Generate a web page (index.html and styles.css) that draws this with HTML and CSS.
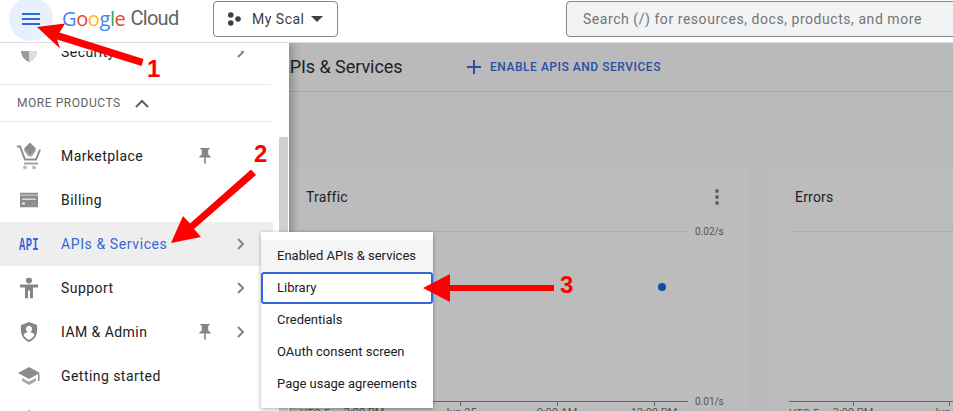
FILE: index.html
```html
<!DOCTYPE html>
<html lang="en">
<head>
  <meta charset="UTF-8" />
  <title>APIs &amp; Services - Google Cloud</title>
  <link rel="stylesheet" href="styles.css">
</head>
<body>
  <header class="topbar">
    <button class="menu-btn" aria-label="Main menu">
      <svg width="18" height="12" viewBox="0 0 18 12"><path d="M0 0h18v2H0zM0 5h18v2H0zM0 10h18v2H0z" fill="#3367d6"/></svg>
    </button>
    <div class="logo">
      <span class="logo-google"><span class="g-blue">G</span><span class="g-red">o</span><span class="g-yellow">o</span><span class="g-blue">g</span><span class="g-green">l</span><span class="g-red">e</span></span>
      <span class="logo-cloud">Cloud</span>
    </div>
    <button class="project-btn">
      <svg width="14" height="14" viewBox="0 0 14 14" fill="#3c4043"><circle cx="2.800" cy="3" r="2.800"/><circle cx="2.800" cy="11" r="2.800"/><circle cx="10" cy="7" r="2.800"/></svg>
      <span>My Scal</span>
      <svg width="12" height="6" viewBox="0 0 12 6"><path d="M0 0h12L6 6z" fill="#3c4043"/></svg>
    </button>
    <div class="search">Search (/) for resources, docs, products, and more</div>
  </header>

  <main class="content">
    <div class="page-head">
      <h1>APIs &amp; Services</h1>
      <a class="enable-link">
        <svg width="14" height="14" viewBox="0 0 14 14"><path d="M6 0h2v6h6v2H8v6H6V8H0V6h6z" fill="#2a4fa5"/></svg>
        ENABLE APIS AND SERVICES
      </a>
    </div>
    <div class="cards">
      <section class="card">
        <div class="card-head">
          <h2>Traffic</h2>
          <svg class="dots" width="4" height="16" viewBox="0 0 4 16" fill="#5f5f5f"><circle cx="2" cy="2" r="1.900"/><circle cx="2" cy="8" r="1.900"/><circle cx="2" cy="14" r="1.900"/></svg>
        </div>
        <div class="chart">
          <div class="plot">
            <span class="axis-zone">UTC-5</span>
            <span class="tick tick-a"><span>3:00 PM</span></span>
            <span class="tick tick-b"><span>Jun 25</span></span>
            <span class="tick tick-c"><span>9:00 AM</span></span>
            <span class="tick tick-d"><span>12:00 PM</span></span>
            <span class="dot"></span>
          </div>
          <div class="scale"><span>0.02/s</span><span>0.01/s</span></div>
        </div>
      </section>
      <section class="card">
        <div class="card-head"><h2>Errors</h2></div>
        <div class="chart">
          <div class="plot">
            <span class="axis-zone">UTC-5</span>
            <span class="tick tick-a"><span>3:00 PM</span></span>
            <span class="tick tick-b"><span>Jun 25</span></span>
          </div>
        </div>
      </section>
    </div>
  </main>

  <aside class="sidebar">
    <div class="sidebar-mask"></div>
    <span class="scrollbar"></span>
    <nav class="nav">
      <a class="nav-item">
        <svg class="nav-icon" width="20" height="20" viewBox="0 0 20 20"><path d="M10 0l8 3v6c0 5-3.500 9-8 11-4.500-2-8-6-8-11V3z" fill="#9a9a9a"/><path d="M10 0l8 3v6c0 5-3.500 9-8 11z" fill="#dedede"/></svg>
        <span class="nav-label">Security</span>
        <svg class="chevron" width="7" height="12" viewBox="0 0 7 12"><path d="M1 1l5 5-5 5" fill="none" stroke="#80868b" stroke-width="2"/></svg>
      </a>
      <div class="section-head">
        <span>MORE PRODUCTS</span>
        <svg width="14" height="9" viewBox="0 0 14 9"><path d="M1 8l6-6 6 6" fill="none" stroke="#5f6368" stroke-width="2"/></svg>
      </div>
      <div class="nav-list">
        <a class="nav-item">
          <svg class="nav-icon" width="24" height="27" viewBox="0 0 24 27"><path d="M0 4h3l5 13h11l4-10" fill="none" stroke="#8c8c8c" stroke-width="2"/><path d="M7 21h14" stroke="#a0a0a0" stroke-width="2"/><path d="M7 7h2l4 6 4-6h2v1l-4 6h-4l-4-6z" fill="#a8a8a8"/><path d="M13 0l6 6-6 7-6-7z" fill="#8c8c8c"/><circle cx="8" cy="25" r="2" fill="#bdbdbd"/><circle cx="17" cy="25" r="2" fill="#bdbdbd"/></svg>
          <span class="nav-label">Marketplace</span>
          <svg class="pin" width="14" height="16" viewBox="5 2 14 20"><path d="M16 9V4h1c.55 0 1-.45 1-1s-.45-1-1-1H7c-.55 0-1 .45-1 1s.45 1 1 1h1v5c0 1.660-1.340 3-3 3v2h5.970v7l1 1 1-1v-7H19v-2c-1.660 0-3-1.340-3-3z" fill="#80868b"/></svg>
        </a>
        <a class="nav-item">
          <svg class="nav-icon" width="18" height="15" viewBox="0 0 18 15"><path d="M0 0h18v15H0z" fill="#8c8c8c"/><path d="M0 2h18v1.500H0z" fill="#bdbdbd"/><path d="M2 6h14v1.500H2z" fill="#d8d8d8"/><path d="M2 10h3v2H2z" fill="#eeeeee"/><path d="M12 11h1v1h-1zM15 11h1v1h-1z" fill="#c4c4c4"/></svg>
          <span class="nav-label">Billing</span>
        </a>
        <a class="nav-item active">
          <svg class="nav-icon" width="20" height="14" viewBox="0 0 20 14"><text x="0" y="12.500" class="api-glyph" textLength="20" lengthAdjust="spacingAndGlyphs">API</text></svg>
          <span class="nav-label">APIs &amp; Services</span>
          <svg class="chevron" width="7" height="12" viewBox="0 0 7 12"><path d="M1 1l5 5-5 5" fill="none" stroke="#80868b" stroke-width="2"/></svg>
        </a>
        <a class="nav-item">
          <svg class="nav-icon" width="18" height="21" viewBox="0 0 18 21" fill="#80868b"><circle cx="9" cy="3" r="3"/><path d="M0 7h18v3h-5v11h-3v-8H8v8H5V10H0z"/></svg>
          <span class="nav-label">Support</span>
          <svg class="chevron" width="7" height="12" viewBox="0 0 7 12"><path d="M1 1l5 5-5 5" fill="none" stroke="#80868b" stroke-width="2"/></svg>
        </a>
        <a class="nav-item">
          <svg class="nav-icon" width="16" height="20" viewBox="0 0 16 20"><path d="M8 0l8 3v6c0 5-3.500 9-8 11-4.500-2-8-6-8-11V3z" fill="#80868b"/><circle cx="8" cy="7" r="3" fill="#fff"/><path d="M2.500 13c1-2 3-3 5.500-3s4.500 1 5.500 3C12 15.500 10 17 8 18c-2-1-4-2.500-5.500-5z" fill="#fff"/></svg>
          <span class="nav-label">IAM &amp; Admin</span>
          <svg class="pin" width="14" height="16" viewBox="5 2 14 20"><path d="M16 9V4h1c.55 0 1-.45 1-1s-.45-1-1-1H7c-.55 0-1 .45-1 1s.45 1 1 1h1v5c0 1.660-1.340 3-3 3v2h5.970v7l1 1 1-1v-7H19v-2c-1.660 0-3-1.340-3-3z" fill="#80868b"/></svg>
          <svg class="chevron" width="7" height="12" viewBox="0 0 7 12"><path d="M1 1l5 5-5 5" fill="none" stroke="#80868b" stroke-width="2"/></svg>
        </a>
        <a class="nav-item">
          <svg class="nav-icon" width="22" height="18" viewBox="0 0 22 18" fill="#8c8c8c"><path d="M11 0l11 6-11 6L0 6z"/><path d="M4 11l7 3.500 7-3.500v3l-7 4-7-4z" fill="#a8a8a8"/><path d="M20 7h1.500v7H20z"/></svg>
          <span class="nav-label">Getting started</span>
        </a>
        <a class="nav-item">
          <svg class="nav-icon" width="20" height="20" viewBox="0 0 20 20"><path d="M10 0l10 6-10 6L0 6z" fill="#9a9a9a"/></svg>
          <span class="nav-label"></span>
        </a>
      </div>
    </nav>
  </aside>

  <ul class="flyout">
    <li class="hover">Enabled APIs &amp; services</li>
    <li class="focused">Library</li>
    <li>Credentials</li>
    <li>OAuth consent screen</li>
    <li>Page usage agreements</li>
  </ul>

  <svg class="notes" width="953" height="411" viewBox="0 0 953 411">
    <g fill="#fe0000">
      <path d="M37 27L65 23.500L59.500 32.500L143.500 59L141.500 66L57 39.500L60 48.500z"/>
      <path d="M171 243L183 216L190 223.500L251 169.500L256 175L194 229L201 237z"/>
      <path d="M423 288L450 274V285H554V291H450V302z"/>
      <text x="147" y="76.500" class="note-num">1</text>
      <text x="254" y="162" class="note-num">2</text>
      <text x="560" y="293" class="note-num">3</text>
    </g>
  </svg>
</body>
</html>
```

FILE: styles.css
```css
:root {
  --blue: #3367d6;
  --gray-icon: #80868b;
  --gray-text: #5f6368;
  --dim: #bababa;
  --card: #bcbcbc;
  --font-family: 'Roboto', 'Liberation Sans', sans-serif;
}

* {
  box-sizing: border-box;
}

html, body {
  height: 100%;
}

body {
  margin: 0;
  position: relative;
  overflow: hidden;
  font-family: var(--font-family);
  color: #202124;
  background-color: var(--dim);
}

h1, h2 {
  margin: 0;
  font-weight: 400;
}

/* top bar */

.topbar {
  height: 43px;
  position: relative;
  z-index: 2;
  display: flex;
  align-items: flex-start;
  background-color: #fff;
  border-bottom: 1px solid #dadce0;
}

.menu-btn {
  width: 44px;
  height: 44px;
  margin: -3px 0 0 9px;
  padding: 0;
  border: none;
  border-radius: 50%;
  background-color: #e8f0fe;
  display: flex;
  align-items: center;
  justify-content: center;
  flex-shrink: 0;
}

.logo {
  margin: 5px 0 0 9px;
  width: 151px;
  display: flex;
  gap: 5px;
  font-family: 'Open Sans', sans-serif;
  font-size: 20px;
  line-height: 27px;
  letter-spacing: -0.4px;
}

.logo-cloud {
  color: var(--gray-text);
  font-family: var(--font-family);
  letter-spacing: -0.7px;
}

.g-blue { color: #4285f4; }
.g-red { color: #ea4335; }
.g-yellow { color: #fbbc05; }
.g-green { color: #34a853; }

.project-btn {
  width: 125px;
  height: 36px;
  margin-top: 1px;
  padding: 0 0 0 14px;
  display: flex;
  align-items: center;
  gap: 10px;
  border: 1px solid var(--gray-icon);
  border-radius: 4px;
  background-color: #fff;
  color: #3c4043;
  font-family: var(--font-family);
  font-size: 14px;
  letter-spacing: 0.5px;
  flex-shrink: 0;
}

.project-btn span {
  width: 49px;
  white-space: nowrap;
  text-align: left;
}

.search {
  flex: 1;
  height: 36px;
  margin: 1px -10px 0 228px;
  padding-left: 16px;
  line-height: 34px;
  font-size: 14px;
  letter-spacing: 0.55px;
  color: #757575;
  background-color: #f1f3f4;
  border: 1px solid var(--gray-icon);
  border-radius: 4px;
}

/* dimmed page behind the menu */

.content {
  height: 368px;
  padding-left: 278px;
  overflow: hidden;
}

.page-head {
  height: 49px;
  padding-bottom: 2px;
  display: flex;
  align-items: center;
  border-bottom: 1px solid #a9a9a9;
}

.page-head h1 {
  width: 189px;
  font-size: 18px;
  letter-spacing: -0.05px;
}

.enable-link {
  margin-top: 2px;
  display: flex;
  align-items: center;
  gap: 9px;
  color: #2a4fa5;
  font-size: 12px;
  font-weight: 500;
  letter-spacing: 0.53px;
}

.cards {
  display: grid;
  grid-template-columns: 471px 471px;
  gap: 18px;
  margin-top: 72px;
  height: 247px;
}

.card {
  padding: 0 26px 0 21px;
  background-color: var(--card);
  border: 1px solid #b8b8b8;
  border-radius: 6px 6px 0 0;
}

.card-head {
  height: 66px;
  padding: 21px 0 0 6px;
  display: flex;
  justify-content: space-between;
}

.card-head h2 {
  font-size: 14px;
  line-height: 22px;
  letter-spacing: 0.2px;
}

.dots {
  margin: 3px 3px 0 0;
}

.chart {
  display: flex;
  gap: 7px;
}

.plot {
  flex: 1;
  height: 171px;
  position: relative;
  border-top: 1px solid #b0b0b0;
  border-bottom: 1px solid #666;
}

.scale {
  width: 27px;
  height: 184px;
  margin-top: -6px;
  display: flex;
  flex-direction: column;
  justify-content: space-between;
  font-size: 10px;
  line-height: 14px;
  color: #555;
}

.tick {
  position: absolute;
  bottom: -5px;
  width: 1px;
  height: 4px;
  background-color: #666;
}

.tick span,
.axis-zone {
  position: absolute;
  white-space: nowrap;
  font-size: 11px;
  line-height: 13px;
  color: #555;
}

.tick span {
  left: 0;
  top: 4px;
  transform: translateX(-50%);
}

.axis-zone {
  left: 0;
  top: calc(100% + 6px);
}

.tick-a { left: 64px; }
.tick-b { left: 160px; }
.tick-c { left: 257px; }
.tick-d { left: 354px; }

.dot {
  position: absolute;
  left: 358px;
  top: 51px;
  width: 8px;
  height: 8px;
  border-radius: 50%;
  background-color: #0b4ea8;
}

/* side menu */

.sidebar {
  position: absolute;
  top: 43px;
  left: 0;
  bottom: 0;
  width: 289px;
  background-color: #fff;
  box-shadow: 3px 0 9px rgba(0, 0, 0, 0.3);
  overflow: hidden;
}

.sidebar-mask {
  position: absolute;
  top: 0;
  left: 0;
  right: 0;
  height: 8px;
  background-color: #fff;
  z-index: 1;
}

.scrollbar {
  position: absolute;
  top: 94px;
  left: 279px;
  width: 9px;
  height: 300px;
  background-color: #d0d0d0;
}

.nav {
  width: 273px;
  margin-top: -13px;
}

.nav-item {
  height: 44px;
  position: relative;
  display: flex;
  align-items: center;
  padding-left: 61px;
  font-size: 14px;
  letter-spacing: 0.45px;
  color: #202124;
}

.nav-item.active {
  background-color: #eeeeee;
  color: var(--blue);
  letter-spacing: 0.6px;
}

.nav-icon {
  position: absolute;
  left: 29px;
  top: 50%;
  transform: translate(-50%, -50%);
}

.api-glyph {
  font-family: 'Liberation Mono', monospace;
  font-size: 18px;
  font-weight: 700;
  fill: var(--blue);
}

.chevron {
  position: absolute;
  left: 237px;
  top: 16px;
}

.pin {
  position: absolute;
  left: 198px;
  top: 14px;
}

.section-head {
  height: 38px;
  margin-top: 10px;
  padding-left: 17px;
  display: flex;
  align-items: center;
  gap: 14px;
  border-top: 1px solid #e8eaed;
  border-bottom: 1px solid #e8eaed;
  border-radius: 0 4px 4px 0;
  font-size: 12px;
  letter-spacing: 0.55px;
  color: var(--gray-text);
}

.nav-list {
  padding-top: 12px;
}

/* flyout under APIs & Services */

.flyout {
  position: absolute;
  top: 232px;
  left: 261px;
  width: 172px;
  margin: 0;
  padding: 8px 0;
  list-style: none;
  background-color: #fff;
  box-shadow: 0 1px 4px rgba(0, 0, 0, 0.35);
}

.flyout li {
  height: 32px;
  padding-left: 16px;
  line-height: 32px;
  font-size: 13px;
  color: #202124;
}

.flyout li.hover {
  background-color: #f5f5f5;
}

.flyout li.focused {
  padding-left: 14px;
  line-height: 28px;
  border: 2px solid var(--blue);
  border-radius: 3px;
}

/* red annotations */

.notes {
  position: absolute;
  z-index: 3;
  top: 0;
  left: 0;
  pointer-events: none;
}

.note-num {
  font-family: 'Liberation Sans', sans-serif;
  font-size: 24px;
  font-weight: 700;
}
```
